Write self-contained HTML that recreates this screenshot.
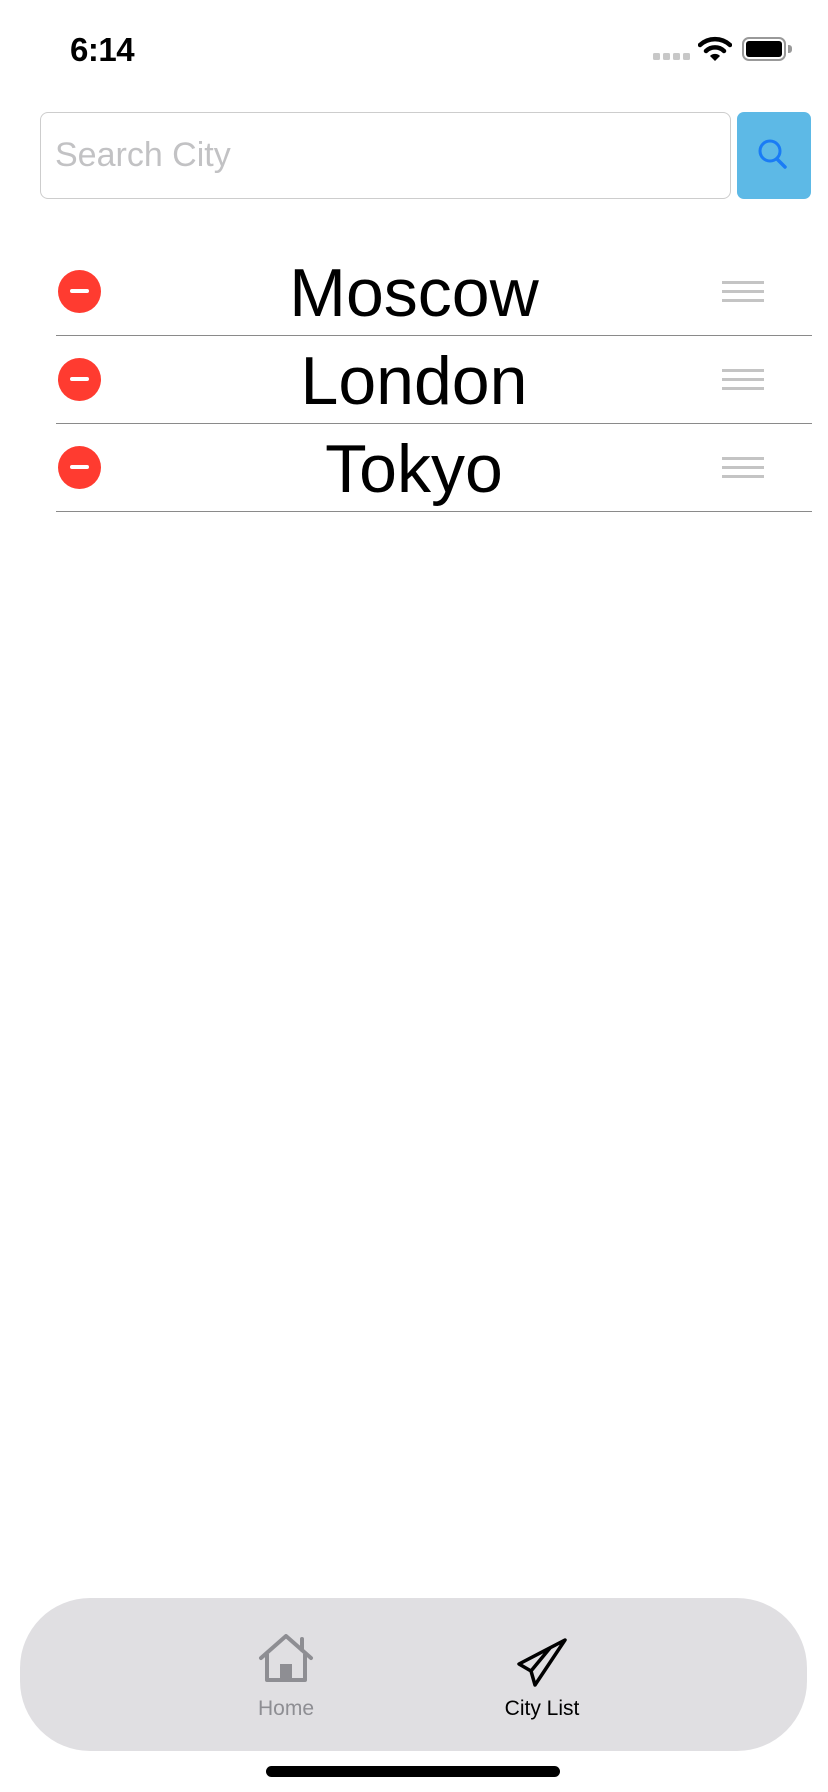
<!DOCTYPE html>
<html><head><meta charset="utf-8"><style>
html,body{margin:0;padding:0;background:#fff;}
body{width:828px;height:1792px;position:relative;overflow:hidden;font-family:"Liberation Sans",sans-serif;}
.abs{position:absolute;}
.time{left:70px;top:31px;font-size:33px;font-weight:bold;letter-spacing:-0.5px;color:#000;}
.dot{top:53px;width:7px;height:7px;background:#c8c8c8;border-radius:1.5px;}
.search{left:40px;top:112px;width:691px;height:87px;border:1px solid #cdcdcd;border-radius:8px;box-sizing:border-box;}
.ph{left:55px;top:136px;font-size:34px;color:#c2c2c4;}
.btn{left:737px;top:112px;width:74px;height:87px;background:#5db9e6;border-radius:7px;}
.row-circ{left:58px;width:43px;height:43px;border-radius:50%;background:#ff3b30;}
.row-circ:after{content:"";position:absolute;left:12px;top:19px;width:19px;height:4px;background:#fff;border-radius:2px;}
.city{left:0;width:828px;text-align:center;font-size:68px;color:#000;}
.sep{left:56px;width:756px;height:1px;background:#8a8a8a;}
.hb{left:722px;width:42px;height:3px;background:#c4c4c4;}
.tab{left:20px;top:1598px;width:787px;height:153px;background:#e0dfe2;border-radius:70px;}
.lbl{font-size:21px;text-align:center;width:180px;}
.ind{left:266px;top:1766px;width:294px;height:11px;background:#000;border-radius:6px;}
</style></head><body>
<div class="abs time">6:14</div>
<div class="abs dot" style="left:653px"></div>
<div class="abs dot" style="left:663px"></div>
<div class="abs dot" style="left:673px"></div>
<div class="abs dot" style="left:683px"></div>
<svg class="abs" style="left:698px;top:36px" width="34" height="26" viewBox="0 0 34 26">
<path d="M2 9 A22 22 0 0 1 32 9" stroke="#000" stroke-width="4.5" fill="none" stroke-linecap="round"/>
<path d="M8 15 A13 13 0 0 1 26 15" stroke="#000" stroke-width="4.5" fill="none" stroke-linecap="round"/>
<path d="M12 20 L17 25 L22 20 A7 7 0 0 0 12 20 Z" fill="#000"/>
</svg>
<div class="abs" style="left:742px;top:37px;width:44px;height:24px;border:2px solid #999;border-radius:7px;box-sizing:border-box;"></div>
<div class="abs" style="left:746px;top:41px;width:36px;height:16px;background:#000;border-radius:3px;"></div>
<div class="abs" style="left:788px;top:45px;width:4px;height:8px;background:#999;border-radius:0 3px 3px 0;"></div>

<div class="abs search"></div>
<div class="abs ph">Search City</div>
<div class="abs btn"></div>
<svg class="abs" style="left:755px;top:137px" width="36" height="36" viewBox="0 0 36 36">
<circle cx="15" cy="14" r="10" stroke="#1a7cf5" stroke-width="3" fill="none"/>
<path d="M22 22 L30 30" stroke="#1a7cf5" stroke-width="3.5" stroke-linecap="round"/>
</svg>

<div class="abs row-circ" style="top:270px"></div>
<div class="abs city" style="top:254px">Moscow</div>
<div class="abs hb" style="top:281px"></div><div class="abs hb" style="top:290px"></div><div class="abs hb" style="top:299px"></div>
<div class="abs sep" style="top:335px"></div>

<div class="abs row-circ" style="top:358px"></div>
<div class="abs city" style="top:342px">London</div>
<div class="abs hb" style="top:369px"></div><div class="abs hb" style="top:378px"></div><div class="abs hb" style="top:387px"></div>
<div class="abs sep" style="top:423px"></div>

<div class="abs row-circ" style="top:446px"></div>
<div class="abs city" style="top:430px">Tokyo</div>
<div class="abs hb" style="top:457px"></div><div class="abs hb" style="top:466px"></div><div class="abs hb" style="top:475px"></div>
<div class="abs sep" style="top:511px"></div>

<div class="abs tab"></div>
<svg class="abs" style="left:257px;top:1634px" width="58" height="50" viewBox="0 0 58 50">
<path d="M4 24 L29 2 L54 24" stroke="#8e8e93" stroke-width="4" fill="none" stroke-linejoin="round" stroke-linecap="round"/>
<path d="M45 16 V5" stroke="#8e8e93" stroke-width="4" stroke-linecap="round"/>
<path d="M10 20 V46 H48 V20" stroke="#8e8e93" stroke-width="4" fill="none" stroke-linejoin="round"/>
<rect x="23" y="30" width="12" height="16" fill="#8e8e93"/>
</svg>
<div class="abs lbl" style="left:196px;top:1697px;color:#8e8e93">Home</div>
<svg class="abs" style="left:516px;top:1636px" width="52" height="52" viewBox="0 0 52 52">
<path d="M49 4 L3 28 L15 35 L34 12 L15 35 L19 49 Z" stroke="#000" stroke-width="3.5" fill="none" stroke-linejoin="round" stroke-linecap="round"/>
</svg>
<div class="abs lbl" style="left:452px;top:1697px;color:#000">City List</div>
<div class="abs ind"></div>
</body></html>
